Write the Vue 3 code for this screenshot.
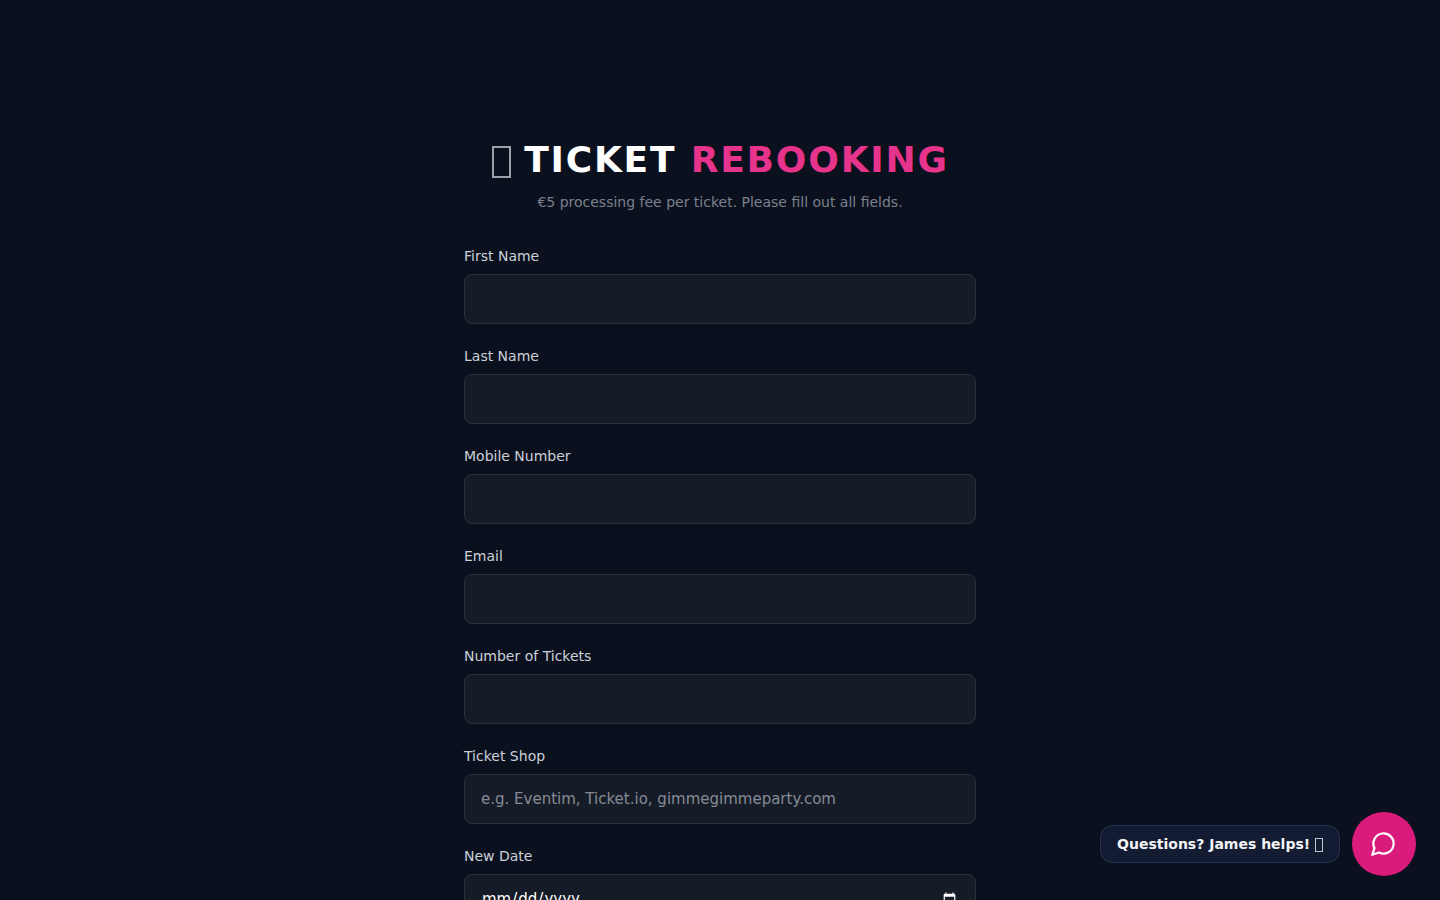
<script setup>
const fields = [
    { label: "First Name", type: "text" },
    { label: "Last Name", type: "text" },
    { label: "Mobile Number", type: "tel" },
    { label: "Email", type: "email" },
    { label: "Number of Tickets", type: "number" },
    { label: "Ticket Shop", type: "text", placeholder: "e.g. Eventim, Ticket.io, gimmegimmeparty.com" },
    { label: "New Date", type: "date" },
];
</script>

<template>
    <main class="page">
        <div class="wrap">
            <header class="head">
                <h1><span class="tofu"></span>TICKET <span class="pink">REBOOKING</span></h1>
                <p>€5 processing fee per ticket. Please fill out all fields.</p>
            </header>

            <form class="form" @submit.prevent>
                <div v-for="f in fields" :key="f.label" class="field">
                    <label>{{ f.label }}</label>
                    <input :type="f.type" :placeholder="f.placeholder" />
                </div>
            </form>
        </div>

        <div class="chat">
            <div class="bubble">Questions? James helps! <span class="tofu-small"></span></div>
            <button type="button" class="fab" aria-label="Chat">
                <svg width="27" height="27" viewBox="0 0 24 24" fill="none" stroke="currentColor" stroke-width="2" stroke-linecap="round" stroke-linejoin="round">
                    <path d="M7.9 20A9 9 0 1 0 4 16.1L2 22Z" />
                </svg>
            </button>
        </div>
    </main>
</template>

<style>
html,
body {
    margin: 0;
    background: #0b101f;
}
</style>

<style scoped>
.page {
    min-height: 100vh;
    padding: 140px 16px 64px;
    box-sizing: border-box;
    font-family: "DejaVu Sans", sans-serif;
    color: #fff;
}

.wrap {
    width: 512px;
    margin: 0 auto;
}

.head {
    text-align: center;
    margin-bottom: 34px;
}

h1 {
    margin: 0 0 12px;
    font-size: 36px;
    line-height: 40px;
    font-weight: 700;
    letter-spacing: 1.8px;
}

/* the emoji has no glyph in the reference, only an empty box */
.tofu {
    display: inline-block;
    width: 19px;
    height: 32px;
    box-sizing: border-box;
    margin: 0 13px 0 1px;
    border: 2px solid #9aa1ad;
    vertical-align: -6px;
}

.pink {
    color: #e6338c;
}

.head p {
    margin: 0;
    font-size: 14px;
    line-height: 20px;
    color: #7a808c;
}

.form {
    display: flex;
    flex-direction: column;
    gap: 22px;
}

.field label {
    display: block;
    margin-bottom: 8px;
    font-size: 14px;
    line-height: 20px;
    color: #cbd0d8;
}

input {
    display: block;
    width: 100%;
    height: 50px;
    box-sizing: border-box;
    padding: 12px 16px;
    border: 1px solid #2a303c;
    border-radius: 8px;
    background: #161c27;
    color: #fff;
    font-family: inherit;
    font-size: 15px;
    color-scheme: dark;
}

input::placeholder {
    color: #858b96;
}

.chat {
    position: fixed;
    right: 24px;
    bottom: 24px;
    display: flex;
    align-items: center;
    gap: 12px;
}

.bubble {
    padding: 8px 16px;
    border: 1px solid #25304a;
    border-radius: 12px;
    background: #141c33;
    font-size: 14px;
    line-height: 20px;
    font-weight: 700;
    color: #f3f4f6;
}

.tofu-small {
    display: inline-block;
    width: 8px;
    height: 14px;
    box-sizing: border-box;
    border: 1px solid #c3c8d0;
    vertical-align: -3px;
}

.fab {
    display: flex;
    align-items: center;
    justify-content: center;
    width: 64px;
    height: 64px;
    padding: 0;
    border: 0;
    border-radius: 50%;
    background: #d91b7b;
    color: #fff;
    cursor: pointer;
}

.fab svg {
    margin: -1px 0 0 -1px;
}
</style>
